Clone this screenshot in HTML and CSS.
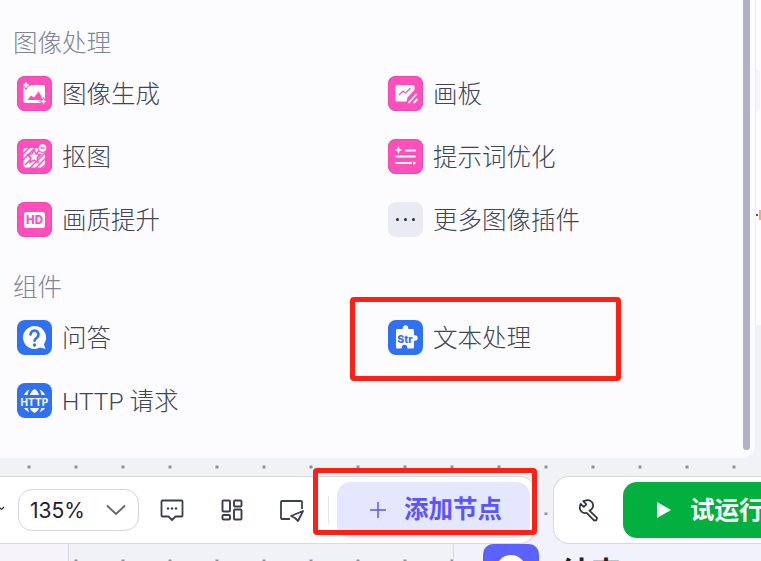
FILE: index.html
```html
<!DOCTYPE html>
<html lang="zh">
<head>
<meta charset="utf-8">
<title>添加节点</title>
<link rel="stylesheet" href="styles.css">
</head>
<body>
<div class="stage">
  <div class="top">
    <section class="panel">
      <div class="panel-body">
        <h2 class="group-title">图像处理</h2>
        <div class="grid">
          <div class="item"><span class="ico pink"><svg viewBox="0 0 35 35"><rect x="6.500" y="9" width="21.500" height="18" rx="2" fill="#fff"/><path fill="#ff4fbc" d="M10.500 24l3.500-4.500 3 2 4.500-6 2.500 4 1.500 4.500z"/><path fill="#fff" stroke="#ff4fbc" d="M9 4.500l1.500 3 3 1.500-3 1.500-1.500 3-1.500-3-3-1.500 3-1.500zM26.500 21.500l1.200 2.800 2.800 1.200-2.800 1.200-1.200 2.800-1.200-2.800-2.800-1.200 2.800-1.200z"/></svg></span><span class="label">图像生成</span></div>
          <div class="item"><span class="ico pink"><svg viewBox="0 0 35 35"><path fill="#fff" d="M9 9h16a1.500 1.500 0 0 1 1.500 1.500v3.500l-7 7.500-1 4H9a1.500 1.500 0 0 1-1.500-1.500v-13A1.500 1.500 0 0 1 9 9z"/><path fill="none" stroke="#ff4fbc" stroke-width="1.200" d="M11 19l4-4 2.500 2 5-5"/><path fill="none" stroke="#fff" stroke-width="1.800" d="M20.500 27l8-9M25.500 27l4-4"/></svg></span><span class="label">画板</span></div>
          <div class="item"><span class="ico pink"><svg viewBox="0 0 35 35"><rect x="6.500" y="9" width="21.500" height="19.500" rx="2.500" fill="#fff"/><path stroke="#ff4fbc" stroke-width="1.500" d="M5 16l9-9M5 22l15-15M8 26l19-19M13 29l16-16M19 29l10-10M24 30l6-6"/><path fill="#ff4fbc" d="M17 9.500l2.500 5 5.500.8-4 3.900.9 5.500-4.900-2.600-4.900 2.600.9-5.500-4-3.900 5.500-.8z"/><path fill="#fff" d="M17 12.500l1.500 3.100 3.400.5-2.500 2.400.6 3.400-3-1.600-3 1.600.6-3.400-2.500-2.400 3.400-.5z"/><circle cx="25.500" cy="9" r="5" fill="#ff4fbc"/><circle cx="25.500" cy="9" r="3.800" fill="#fff"/><path stroke="#ff4fbc" stroke-width="1.400" d="M23.500 9h4"/></svg></span><span class="label">抠图</span></div>
          <div class="item"><span class="ico pink"><svg viewBox="0 0 35 35"><path fill="none" stroke="#fff" stroke-width="2" stroke-linecap="round" d="M18 11.500h9M8 17.500h19M8 24h15"/><path fill="#fff" d="M10.500 7l1.100 2.900 2.900 1.100-2.900 1.100-1.100 2.900-1.100-2.900-2.900-1.100 2.900-1.100zM25.500 22l2.500 2-2.500 2z"/></svg></span><span class="label">提示词优化</span></div>
          <div class="item"><span class="ico pink"><span class="hd">HD</span></span><span class="label">画质提升</span></div>
          <div class="item"><span class="ico grey"><svg viewBox="0 0 35 35"><g fill="#2a2d3b"><circle cx="9.500" cy="17.500" r="1.500"/><circle cx="17.500" cy="17.500" r="1.500"/><circle cx="25.500" cy="17.500" r="1.500"/></g></svg></span><span class="label">更多图像插件</span></div>
        </div>
        <h2 class="group-title second">组件</h2>
        <div class="grid">
          <div class="item"><span class="ico blue"><svg viewBox="0 0 35 35"><path fill="#fff" d="M17.500 6a11.500 11.500 0 1 0 5.500 21.600l5.500 1.400-1.600-4.800A11.500 11.500 0 0 0 17.500 6z"/><path fill="none" stroke="#3071f2" stroke-width="2.600" stroke-linecap="round" d="M13.500 14.500a4 4 0 1 1 6.300 3.300c-1.500 1-2.300 1.700-2.300 3"/><circle cx="17.500" cy="25" r="1.700" fill="#3071f2"/></svg></span><span class="label">问答</span></div>
          <div class="item"><span class="ico blue"><svg viewBox="0 0 35 35"><path fill="#fff" d="M9.500 9H14c.7 0 .8-.5.800-1a2.700 2.700 0 0 1 5.400 0c0 .5.100 1 .8 1h3.500c1 0 1.500.5 1.500 1.500v4c0 .7.500.8 1 .8a2.700 2.700 0 0 1 0 5.400c-.5 0-1 .1-1 .8V27c0 1-.5 1.500-1.500 1.500H20c-.7 0-.8-.5-.8-1a2.700 2.700 0 0 0-5.400 0c0 .5-.1 1-.8 1H9.500C8.500 28.500 8 28 8 27V10.500C8 9.500 8.500 9 9.500 9z"/><text class="str" x="17" y="22.500">Str</text></svg></span><span class="label">文本处理</span></div>
          <div class="item"><span class="ico blue"><svg viewBox="0 0 35 35"><path fill="#fff" d="M17.500 6c-2 1-3.800 3-4.500 6h9c-.7-3-2.500-5-4.500-6zM12.500 6.500C10 7.500 8 9.500 7 12h3.500c.4-2 1-4 2-5.500zM22.500 6.500c1 1.500 1.600 3.500 2 5.500H28c-1-2.500-3-4.500-5.500-5.500zM17.500 30c-2-1-3.800-3-4.500-5h9c-.7 2-2.500 4-4.500 5zM12.500 29C10 28 8 26.800 7 25h3.500c.4 1.500 1 2.800 2 4zM22.500 29c1-1.200 1.600-2.500 2-4H28c-1 1.800-3 3-5.500 4z"/><text class="http" x="17.500" y="23">HTTP</text></svg></span><span class="label">HTTP 请求</span></div>
        </div>
      </div>
      <div class="scroll-track"><div class="scroll-thumb"></div></div>
    </section>
    <aside class="side">
      <div class="side-upper"><span class="side-blob"></span><span class="side-marks"><i class="dot-blue"></i><i class="dot-orange"></i></span></div>
    </aside>
  </div>

  <div class="canvas-strip">
    <div class="bar bar-left">
      <svg class="mini-chev" viewBox="0 0 6 6"><path fill="none" stroke="#2a2d3b" stroke-width="1.200" d="M0 1l2.500 2.500L5 1"/></svg>
      <div class="zoom-select"><span class="zoom-val">135%</span><svg class="chev" viewBox="0 0 20 12"><path fill="none" stroke="#60646f" stroke-width="1.800" stroke-linecap="round" d="M1.500 2l8.500 8 8.500-8"/></svg></div>
      <div class="tools">
        <svg class="tool" viewBox="0 0 24 24"><path fill="none" stroke="#3b3f50" stroke-width="1.800" stroke-linejoin="round" d="M2.500 2.500h19a1 1 0 0 1 1 1v14a1 1 0 0 1-1 1h-6l-3.500 3.500-3.500-3.500h-6a1 1 0 0 1-1-1v-14a1 1 0 0 1 1-1z"/><g fill="#3b3f50"><circle cx="8" cy="10.500" r="1.200"/><circle cx="12" cy="10.500" r="1.200"/><circle cx="16" cy="10.500" r="1.200"/></g></svg>
        <svg class="tool" viewBox="0 0 24 24"><g fill="none" stroke="#3b3f50" stroke-width="1.900" stroke-linejoin="round"><rect x="2.500" y="2.500" width="7.500" height="11" rx="1"/><rect x="14" y="2.500" width="7.500" height="6" rx="1"/><rect x="14" y="11.500" width="7.500" height="10" rx="1"/><rect x="2.500" y="17" width="7.500" height="4.500" rx="1"/></g></svg>
        <svg class="tool" viewBox="0 0 24 24"><path fill="none" stroke="#3b3f50" stroke-width="1.800" stroke-linejoin="round" d="M10 21H2a1 1 0 0 1-1-1V4a1 1 0 0 1 1-1h19a1 1 0 0 1 1 1v7M23 13l-12 5 4 2 3 3z"/></svg>
      </div>
      <div class="divider"></div>
      <div class="add-btn"><svg class="plus" viewBox="0 0 16 16"><path fill="none" stroke="#5a55ff" stroke-width="1.500" d="M8 0v16M0 8h16"/></svg><span>添加节点</span></div>
    </div>
    <div class="bar bar-right">
      <svg class="wrench" viewBox="0 0 24 24"><path fill="none" stroke="#2f3240" stroke-width="1.800" stroke-linejoin="round" d="M8.500 1.500l-3 .7 3.200 3.300-2.700 2.700-3.300-3.200-.7 3a5.500 5.500 0 0 0 7 6.400l7.700 8 2.400-.2.800-2.400-8-7.700A5.500 5.500 0 0 0 8.500 1.500z"/></svg>
      <div class="run-btn"><svg class="play" viewBox="0 0 14 16"><path fill="#fff" d="M0 0l14 8-14 8z"/></svg><span>试运行</span></div>
    </div>
  </div>

  <div class="below">
    <div class="below-left"></div>
    <div class="below-mid"></div>
    <div class="below-right"><span class="node-ico"><i class="node-dot"></i></span><span class="node-title">结束</span></div>
  </div>

  <div class="mark mark-text"></div>
  <div class="mark mark-add"></div>
</div>
</body>
</html>
```

FILE: styles.css
```css
* { box-sizing: border-box; }
html, body { margin: 0; padding: 0; }
body { width: 761px; height: 561px; overflow: hidden; background: #f1f2f5; font-family: "Noto Sans CJK SC", "Noto Sans", sans-serif; }
.stage { position: relative; width: 761px; height: 561px; overflow: hidden; display: flex; flex-direction: column; background-color: #f1f2f5; }
.top { flex: none; height: 458px; display: flex; }
.panel { flex: none; height: 458px; width: 755px; background: #fcfcff; border-radius: 0 0 13px 0; display: flex; }
.panel-body { flex: 1; padding: 24px 0 0 13px; }
.scroll-track { width: 12px; flex: none; }
.scroll-thumb { width: 7px; height: 450px; background: #afb1c6; border-radius: 0 0 4px 4px; }
.side { flex: 1; }
.side-upper { height: 325px; background: #fcfcfe; border-left: 1px solid #ececf2; display: flex; flex-direction: column; padding-top: 70px; }
.side-blob { display: block; width: 4px; height: 42px; background: #f3f3f9; border-radius: 0 4px 4px 0; flex: none; }
.side-marks { display: flex; align-items: center; justify-content: space-between; height: 10px; margin-top: 98px; flex: none; }
.dot-blue { width: 2px; height: 2px; background: #3a5f8c; }
.dot-orange { width: 2px; height: 10px; background: #f0b264; }
.group-title { margin: 0; font-size: 24.500px; font-weight: 300; line-height: 36px; color: #7f8498; }
.group-title.second { margin-top: 17px; }
.grid { display: grid; grid-template-columns: 371px 1fr; grid-auto-rows: 63px; padding: 2px 0 0 4px; }
.item { display: flex; align-items: center; gap: 10px; height: 63px; }
.ico { width: 35px; height: 35px; border-radius: 8px; flex: none; display: flex; align-items: center; justify-content: center; }
.ico svg { width: 35px; height: 35px; display: block; }
.pink { background: #ff4fbc; box-shadow: inset 0 0 0 1px #e94bb0; }
.blue { background: #3071f2; }
.grey { background: #e8ebf3; }
.label { font-size: 24.500px; font-weight: 300; line-height: 36px; padding-top: 2px; color: #404454; white-space: nowrap; font-family: "Roboto", "Noto Sans CJK SC", sans-serif; }
.hd { width: 21px; height: 16px; background: #fff; border-radius: 2.500px; color: #ff4fbc; font: 800 11.500px/16px "Inter", sans-serif; text-align: center; }
.str { font: 800 10.500px "Inter", sans-serif; fill: #3071f2; text-anchor: middle; }
.http { font: 700 10px "Inter", sans-serif; fill: #fff; text-anchor: middle; letter-spacing: .2px; }

.canvas-strip { flex: none; height: 86px; display: flex; gap: 17px; align-items: flex-start; padding-top: 18px; position: relative;
  background-image: radial-gradient(circle, #8b8f99 1.400px, transparent 1.700px); background-size: 47px 47px; background-position: 5.500px -14.500px; }
.canvas-strip::before { content: ""; position: absolute; left: 530px; top: 57px; width: 30px; height: 29px; background: #f2f2fd; }
.bar { height: 68px; background: #fff; border: 1px solid #d6d8e4; display: flex; align-items: center; flex: none; position: relative; }
.bar-left { width: 537px; margin-left: -1px; border-left: 0; border-radius: 0 16px 16px 0; padding-right: 6px; }
.mini-chev { width: 6px; height: 6px; margin-top: -2px; flex: none; }
.zoom-select { width: 121px; height: 42px; margin-left: 13px; border: 1px solid #d3d5e3; border-radius: 14px; display: flex; align-items: center; justify-content: space-between; padding: 0 12px 0 11px; flex: none; }
.zoom-val { font-size: 21px; color: #1f2230; font-family: "Inter", "Noto Sans CJK SC", sans-serif; }
.chev { width: 20px; height: 12px; }
.tools { display: flex; gap: 36px; margin-left: 21px; flex: none; }
.tool { width: 24px; height: 24px; display: block; }
.divider { width: 1px; height: 28px; background: #e4e5ec; margin-left: 24px; flex: none; }
.add-btn { margin-left: 8px; width: 193px; height: 56px; background: #e5e6ff; border-radius: 14px; display: flex; align-items: center; justify-content: center; gap: 18px; color: #5a55ff; font-size: 24.500px; font-weight: 700; line-height: 52px; padding: 0 0 4px 5px; flex: none; }
.plus { width: 16px; height: 16px; margin-top: 4px; }
.bar-right { flex: 1; border-right: 0; border-radius: 16px 0 0 16px; padding-left: 24px; }
.wrench { width: 23px; height: 23px; flex: none; }
.run-btn { margin-left: 22px; width: 160px; height: 56px; flex: none; background: #03b03f; border-radius: 14px 0 0 14px; display: flex; align-items: center; gap: 19px; padding: 0 0 4px 34px; color: #fff; font-size: 24.500px; font-weight: 700; white-space: nowrap; }
.play { width: 14px; height: 16px; flex: none; margin-top: 4px; }

.below { flex: 1; display: flex; min-height: 0; }
.below-left { width: 69px; background: #f7f3fa; border-right: 1px solid #d9dae6; }
.below-mid { width: 384px; background-image: radial-gradient(circle, #8b8f99 1.400px, transparent 1.700px); background-size: 47px 47px; background-position: -16.500px -6.500px; }
.below-right { flex: 1; background: #f2f2fd; border-left: 1px solid #d9dae6; display: flex; gap: 22px; padding-left: 29px; overflow: hidden; }
.node-ico { width: 56px; height: 56px; border-radius: 10px; background: #5c62ff; flex: none; display: flex; justify-content: center; padding-top: 11px; }
.node-dot { width: 30px; height: 30px; border-radius: 50%; background: #fff; flex: none; }
.node-title { font-size: 30px; font-weight: 700; line-height: 36px; color: #222; padding-top: 8px; }

.mark { position: absolute; border: 5px solid #fe2015; border-radius: 4px; pointer-events: none; }
.mark-text { left: 350px; top: 297px; width: 271px; height: 84px; }
.mark-add { left: 313px; top: 468px; width: 224px; height: 67px; }
```
